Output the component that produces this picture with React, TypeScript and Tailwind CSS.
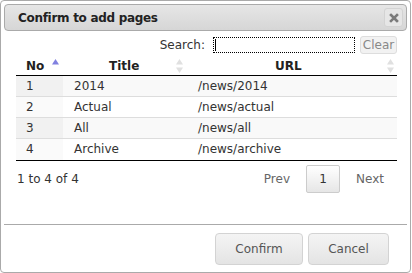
const rows = [
  { no: 1, title: "2014", url: "/news/2014" },
  { no: 2, title: "Actual", url: "/news/actual" },
  { no: 3, title: "All", url: "/news/all" },
  { no: 4, title: "Archive", url: "/news/archive" },
];

const SortBoth = () => (
  <svg width="9" height="16" viewBox="0 0 9 16" className="shrink-0">
    <path d="M4.5 1 L8 6.5 L1 6.5 Z" fill="#e0e0e0" />
    <path d="M4.5 15 L8 9.5 L1 9.5 Z" fill="#e0e0e0" />
  </svg>
);

const SortAsc = () => (
  <svg width="9" height="16" viewBox="0 0 9 16" className="shrink-0">
    <path d="M4.5 1 L8 6.5 L1 6.5 Z" fill="#8080e0" />
  </svg>
);

export default function App() {
  return (
    <div
      className="w-[412px] h-[273px] bg-white text-[#333]"
      style={{ fontFamily: '"DejaVu Sans", Verdana, sans-serif' }}
    >
      <div className="w-[411px] h-[273px] border border-[#aaa] rounded-[4px] p-[3px] flex flex-col">
        {/* Title bar */}
        <div className="h-[27px] border border-[#aaa] rounded-[4px] bg-gradient-to-b from-[#e6e6e6] to-[#d6d6d6] flex items-center justify-between pl-[13px] pr-[3px]">
          <span className="text-[12px] font-bold text-[#222] tracking-[-0.3px]">Confirm to add pages</span>
          <div className="w-[19px] h-[19px] border border-[#d3d3d3] rounded-[3px] bg-[#e6e6e6] flex items-center justify-center">
            <svg width="10" height="10" viewBox="0 0 10 10">
              <path d="M2 2 L8 8 M8 2 L2 8" stroke="#7a7a7a" strokeWidth="2.6" strokeLinecap="square" />
            </svg>
          </div>
        </div>

        {/* Content */}
        <div className="pl-[12px] pr-[10px] pt-[5px] flex-1">
          <div className="flex items-center justify-end gap-[8px] h-[18px]">
            <span className="text-[12px]">Search:</span>
            <div className="w-[142px] h-[16px] border border-dotted border-black bg-white flex items-center pl-[1px]">
              <div className="w-px h-[12px] bg-black" />
            </div>
            <div className="w-[37px] h-[18px] ml-[-3px] border border-[#ddd] rounded-[3px] bg-[#f2f2f2] text-[12px] text-[#888] flex items-center justify-center">
              Clear
            </div>
          </div>

          <table className="w-[381px] mt-[3px] border-collapse text-[12px]">
            <thead>
              <tr className="h-[18px] border-b border-black">
                <th className="w-[47px] font-bold text-[#222] text-left pl-[10px]">
                  <div className="flex items-center justify-between pr-[3px]">
                    <span>No</span>
                    <SortAsc />
                  </div>
                </th>
                <th className="w-[134px] font-bold text-[#222]">
                  <div className="flex items-center justify-between pl-[46px] pr-[13px]">
                    <span>Title</span>
                    <SortBoth />
                  </div>
                </th>
                <th className="font-bold text-[#222]">
                  <div className="flex items-center justify-between pl-[78px] pr-[2px]">
                    <span>URL</span>
                    <SortBoth />
                  </div>
                </th>
              </tr>
            </thead>
            <tbody>
              {rows.map((r, i) => (
                <tr
                  key={r.no}
                  className={`h-[21px] ${i > 0 ? "border-t border-[#ddd]" : ""} ${i % 2 === 0 ? "bg-[#f9f9f9]" : "bg-white"}`}
                >
                  <td className={`pl-[10px] ${i % 2 === 0 ? "bg-[#f1f1f1]" : "bg-[#fafafa]"}`}>{r.no}</td>
                  <td className="pl-[11px]">{r.title}</td>
                  <td className="pl-[1px]">{r.url}</td>
                </tr>
              ))}
            </tbody>
          </table>
          <div className="w-[381px] h-px bg-black" />

          <div className="flex items-center justify-between w-[381px] mt-[4px]">
            <span className="text-[12px] pl-[1px] self-start mt-[5px]">1 to 4 of 4</span>
            <div className="flex items-center text-[12px]">
              <span className="text-[#666] mr-[16px]">Prev</span>
              <div className="w-[34px] h-[28px] border border-[#ccc] rounded-[2px] bg-gradient-to-b from-[#fff] to-[#e6e6e6] flex items-center justify-center text-[#333]">
                1
              </div>
              <span className="text-[#666] ml-[16px] mr-[13px]">Next</span>
            </div>
          </div>
        </div>

        {/* Footer */}
        <div className="border-t border-[#aaa] h-[45px] flex items-start justify-end gap-[5px] pt-[8px] pr-[18px]">
          <button className="w-[88px] h-[32px] border border-[#d3d3d3] rounded-[4px] bg-gradient-to-b from-[#f4f4f4] to-[#e4e4e4] text-[12px] text-[#555]">
            Confirm
          </button>
          <button className="w-[81px] h-[32px] border border-[#d3d3d3] rounded-[4px] bg-gradient-to-b from-[#f4f4f4] to-[#e4e4e4] text-[12px] text-[#555]">
            Cancel
          </button>
        </div>
      </div>
    </div>
  );
}
